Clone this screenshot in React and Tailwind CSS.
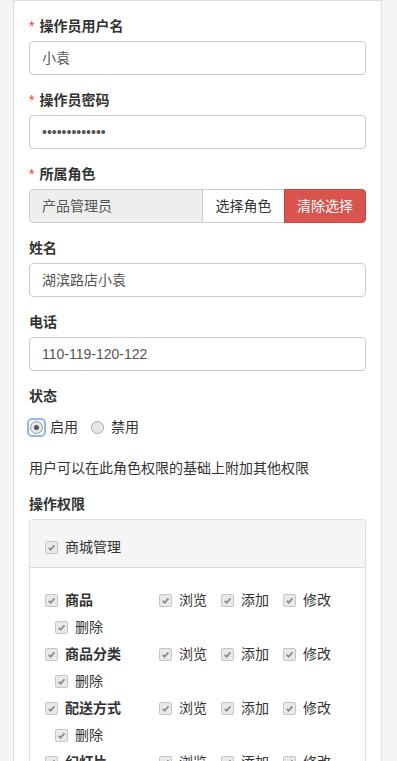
import React from 'react';

const groups = ['商品', '商品分类', '配送方式', '幻灯片', '文章', '优惠券'];
const actions = ['浏览', '添加', '修改', '删除'];

// disabled + checked checkbox look
const Check = () => (
    <span className="inline-flex h-[13px] w-[13px] shrink-0 items-center justify-center rounded-[2px] border border-[#c6c6c6] bg-[#e9e9e9]">
        <svg viewBox="0 0 10 10" className="h-[9px] w-[9px]">
            <path d="M1.8 5.3 L4 7.4 L8.3 2.6" stroke="#8c8c8c" strokeWidth="1.9" fill="none" />
        </svg>
    </span>
);

const Label = ({ required, children }) => (
    <div className="mb-[5px] h-[20px] text-[14px] leading-[20px] font-bold text-[#333]">
        {required && <span className="mr-[5px] font-normal text-[#e33]">*</span>}
        {children}
    </div>
);

const Field = ({ children }) => (
    <div className="flex h-[34px] items-center rounded-[4px] border border-[#ccc] px-[12px] text-[14px] text-[#555]">
        {children}
    </div>
);

const App = () => {
    return (
        <div className="min-h-screen bg-[#f5f5f5] pl-[13px] pr-[15px] font-['Liberation_Sans','Noto_Sans_CJK_SC',sans-serif]">
            <div className="border border-[#ddd] bg-white px-[15px] pt-[15px]">
                <Label required>操作员用户名</Label>
                <Field>小袁</Field>
                <div className="h-[15px]" />

                <Label required>操作员密码</Label>
                <div className="h-[34px] rounded-[4px] border border-[#ccc]">
                    <input type="password" readOnly defaultValue="1234567890123"
                        className="h-full w-full bg-transparent px-[12px] text-[14px] text-[#555] outline-none" />
                </div>
                <div className="h-[15px]" />

                <Label required>所属角色</Label>
                <div className="flex h-[34px] text-[14px]">
                    <div className="flex flex-1 items-center rounded-l-[4px] border border-[#ccc] bg-[#eee] px-[12px] text-[#555]">
                        产品管理员
                    </div>
                    <div className="flex w-[81px] items-center justify-center border-y border-[#ccc] bg-white text-[#333]">
                        选择角色
                    </div>
                    <div className="flex w-[82px] items-center justify-center rounded-r-[4px] border border-[#d43f3a] bg-[#d9534f] text-white">
                        清除选择
                    </div>
                </div>
                <div className="h-[15px]" />

                <Label>姓名</Label>
                <Field>湖滨路店小袁</Field>
                <div className="h-[15px]" />

                <Label>电话</Label>
                <Field>110-119-120-122</Field>
                <div className="h-[15px]" />

                <Label>状态</Label>
                <div className="mt-[11px] flex h-[20px] items-center text-[14px] text-[#333]">
                    <span className="flex h-[15px] w-[15px] items-center justify-center rounded-[3px] outline-2 outline-[#8fb6ee]">
                        <span className="flex h-[13px] w-[13px] items-center justify-center rounded-full border border-[#999] bg-[#e6e6e6]">
                            <span className="h-[5px] w-[5px] rounded-full bg-[#555]" />
                        </span>
                    </span>
                    <span className="ml-[6px]">启用</span>
                    <span className="ml-[13px] h-[13px] w-[13px] rounded-full border border-[#aaa] bg-[#e6e6e6]" />
                    <span className="ml-[7px]">禁用</span>
                </div>

                <div className="mt-[21px] h-[20px] text-[14px] leading-[20px] text-[#333]">
                    用户可以在此角色权限的基础上附加其他权限
                </div>

                <div className="mt-[16px]">
                    <Label>操作权限</Label>
                </div>

                <div className="rounded-t-[4px] border border-b-0 border-[#ddd]">
                    <div className="flex items-center border-b border-[#ddd] bg-[#f5f5f5] px-[15px] pt-[17px] pb-[10px]">
                        <div className="flex h-[20px] items-center text-[14px] text-[#333]">
                            <Check />
                            <span className="ml-[7px]">商城管理</span>
                        </div>
                    </div>
                    <div className="px-[15px] pt-[19px] pb-[10px]">
                        {groups.map((g) => (
                            <div key={g} className="flex flex-wrap">
                                <div className="flex h-[27px] w-[104px] items-center text-[14px] font-bold text-[#333]">
                                    <Check />
                                    <span className="ml-[7px]">{g}</span>
                                </div>
                                {actions.map((a) => (
                                    <div key={a} className="ml-[10px] flex h-[27px] w-[52px] items-center text-[14px] text-[#333]">
                                        <Check />
                                        <span className="ml-[7px]">{a}</span>
                                    </div>
                                ))}
                            </div>
                        ))}
                    </div>
                </div>
            </div>
        </div>
    );
};

export default App;
